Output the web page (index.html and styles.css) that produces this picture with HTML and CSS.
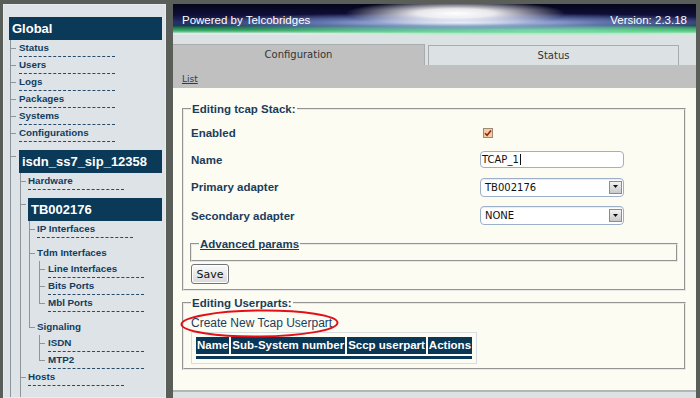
FILE: index.html
```html
<!DOCTYPE html>
<html lang="en">
<head>
  <meta charset="UTF-8">
  <meta name="viewport" content="width=device-width, initial-scale=1.0">
  <title>Toolpack - Editing tcap Stack</title>
  <link rel="stylesheet" href="styles.css">
</head>
<body>
  <div class="sidebar">
    <div class="nav-head">Global</div>
    <ul class="tree open lvl1">
      <li><a href="#">Status</a></li>
      <li><a href="#">Users</a></li>
      <li><a href="#">Logs</a></li>
      <li><a href="#">Packages</a></li>
      <li><a href="#">Systems</a></li>
      <li><a href="#">Configurations</a></li>
      <li class="group">
        <div class="nav-head">isdn_ss7_sip_12358</div>
        <ul class="tree open lvl2">
          <li><a href="#">Hardware</a></li>
          <li class="group">
            <div class="nav-head">TB002176</div>
            <ul class="tree lvl3">
              <li><a href="#">IP Interfaces</a></li>
              <li class="cat">
                <span>Tdm Interfaces</span>
                <ul class="tree lvl4">
                  <li><a href="#">Line Interfaces</a></li>
                  <li><a href="#">Bits Ports</a></li>
                  <li><a href="#">Mbl Ports</a></li>
                </ul>
              </li>
              <li class="cat">
                <span>Signaling</span>
                <ul class="tree lvl4">
                  <li><a href="#">ISDN</a></li>
                  <li><a href="#">MTP2</a></li>
                </ul>
              </li>
            </ul>
          </li>
          <li><a href="#">Hosts</a></li>
        </ul>
      </li>
    </ul>
  </div>

  <div class="main">
    <div class="banner">
      <span>Powered by Telcobridges</span>
      <span>Version: 2.3.18</span>
    </div>
    <div class="tabs">
      <div class="tab active">Configuration</div>
      <div class="tab">Status</div>
    </div>
    <div class="subbar"><a href="#">List</a></div>

    <div class="content">
      <fieldset class="box">
        <legend>Editing tcap Stack:</legend>
        <div class="form">
          <label>Enabled</label>
          <span class="check">
            <svg width="8" height="8" viewBox="0 0 8 8"><path d="M1 4.2 L3.1 6.3 L7 1.4" fill="none" stroke="#8a2c0c" stroke-width="1.6"/></svg>
          </span>
          <label>Name</label>
          <div class="text"><span>TCAP_1</span><span class="caret"></span></div>
          <label>Primary adapter</label>
          <div class="select">
            <span class="select-value">TB002176</span>
            <span class="select-btn"><svg width="5" height="4" viewBox="0 0 5 4"><path d="M0 0 H5 L2.5 3 Z" fill="#111"/></svg></span>
          </div>
          <label>Secondary adapter</label>
          <div class="select">
            <span class="select-value">NONE</span>
            <span class="select-btn"><svg width="5" height="4" viewBox="0 0 5 4"><path d="M0 0 H5 L2.5 3 Z" fill="#111"/></svg></span>
          </div>
        </div>
        <fieldset class="box advanced">
          <legend><a href="#">Advanced params</a></legend>
        </fieldset>
        <button class="btn" type="button">Save</button>
      </fieldset>

      <fieldset class="box parts-box">
        <legend>Editing Userparts:</legend>
        <div class="create">
          <a href="#">Create New Tcap Userpart</a>
          <svg class="circle" width="160" height="30" viewBox="0 0 160 30">
            <ellipse cx="79.5" cy="14.5" rx="78" ry="13" fill="none" stroke="#e3101a" stroke-width="2" transform="rotate(-0.6 80 15)"/>
          </svg>
        </div>
        <table class="parts">
          <tr>
            <th>Name</th>
            <th>Sub-System number</th>
            <th>Sccp userpart</th>
            <th>Actions</th>
          </tr>
          <tr class="bar"><td colspan="4"></td></tr>
        </table>
      </fieldset>
    </div>
    <div class="footer"></div>
  </div>
</body>
</html>
```

FILE: styles.css
```css
body {
  margin: 0;
  height: 100vh;
  box-sizing: border-box;
  padding: 4px 4px 0 3px;
  display: flex;
  gap: 7px;
  overflow: hidden;
  background: #5a5e58;
  font-family: "Liberation Sans", Arial, sans-serif;
}

/* left navigation */
.sidebar {
  flex: 0 0 163px;
  box-sizing: border-box;
  background: #dde3e6;
  border: 1px solid #e8ecee;
  padding: 12px 3px 0 5px;
  overflow: hidden;
}
.nav-head {
  position: relative;
  background: #0b3958;
  color: #fff;
  font-weight: bold;
  font-size: 13px;
  line-height: 23px;
  padding-left: 3px;
  white-space: nowrap;
}
.tree {
  list-style: none;
  margin: 0;
  padding: 0;
  --b: 0px;
}
.tree.open {
  border-left: 1px solid #8d969b;
  --b: 1px;
  padding-bottom: 40px;
}
.lvl1 { margin-left: 1px; --pad: 8px; }
.lvl2 { margin-left: 1px; --pad: 7px; padding-bottom: 0; }
.lvl3 { margin-left: 1px; --pad: 8px; }
.lvl4 { margin-left: 2px; --pad: 9px; }

.tree > li {
  position: relative;
  display: flow-root;
  padding-left: var(--pad);
}
.tree > li:first-child { padding-top: 2px; }
.tree > li.group { padding-top: 6px; }
.tree > li.cat { padding-top: 7px; }

/* vertical connector for closed lists */
.tree:not(.open) > li::after {
  content: "";
  position: absolute;
  left: 0;
  top: 0;
  bottom: 0;
  width: 1px;
  background: #8d969b;
}
.tree:not(.open) > li:last-child::after { bottom: auto; height: 7px; }
.tree:not(.open) > li.cat:last-child::after { height: 14px; }

/* horizontal ticks */
.tree > li > a::before,
.tree > li > span::before,
.tree > li > .nav-head::before {
  content: "";
  position: absolute;
  top: 6px;
  left: calc(0px - var(--pad) - var(--b));
  width: 6px;
  height: 1px;
  background: #8d969b;
}
.tree a,
.tree .cat > span {
  position: relative;
  display: block;
  color: #113d60;
  font-weight: bold;
  font-size: 9.8px;
  line-height: 12px;
  text-decoration: none;
  white-space: nowrap;
}
.tree a {
  width: 96px;
  padding-bottom: 2px;
  margin-bottom: 2px;
  border-bottom: 1px dashed #27496a;
}
.tree .cat > span { padding-bottom: 2px; }

/* main column */
.main {
  flex: 0 0 523px;
  display: flex;
  flex-direction: column;
}
.banner {
  height: 31px;
  flex: none;
  display: flex;
  justify-content: space-between;
  align-items: center;
  padding: 0 9px;
  color: #fff;
  font-size: 11.5px;
  background:
    radial-gradient(ellipse 110px 13px at 54% 30%, #ffffff 0%, rgba(255,255,255,0.9) 35%, rgba(255,255,255,0) 100%),
    radial-gradient(ellipse 280px 10px at 55% 60%, rgba(225,235,255,0.95) 0%, rgba(150,175,235,0.55) 50%, rgba(80,100,180,0) 100%),
    radial-gradient(ellipse 300px 6px at 70% 86%, rgba(120,230,160,0.9) 0%, rgba(120,230,160,0) 100%),
    linear-gradient(to bottom, rgba(0,0,0,0) 0%, rgba(0,0,0,0) 70%, #1f8050 77%, #38a866 85%, #6cc690 90%, #dfe9e6 95%, #e3e9ea 100%),
    linear-gradient(to bottom, #05051a 0%, #0f0f38 35%, #26306a 60%, #1c3a52 72%);
}
.tabs {
  flex: none;
  display: flex;
  gap: 3px;
  padding-top: 9px;
  background: #dce2e4;
}
.tab {
  width: 251px;
  height: 20px;
  box-sizing: border-box;
  margin-top: 1px;
  border: 1px solid #a7acae;
  border-bottom: none;
  text-align: center;
  font-family: "DejaVu Sans", Verdana, sans-serif;
  font-size: 10px;
  line-height: 19px;
  color: #333;
}
.tab.active {
  width: 252px;
  height: 21px;
  margin-top: 0;
  border-left: none;
  background: #c0c0c0;
  line-height: 20px;
}
.subbar {
  flex: none;
  height: 23px;
  background: #c0c0c0;
  padding-left: 9px;
  line-height: 23px;
}
.subbar a {
  font-family: "DejaVu Sans", Verdana, sans-serif;
  font-size: 9px;
  color: #1c3f63;
}

.content {
  flex: none;
  background: #fdfcf3;
  padding: 14px 10px 20px 9px;
}
.footer {
  flex: 1;
  border-top: 2px solid #b3b6b6;
  background: #dce2e4;
}

.box {
  margin: 0;
  padding: 4px 7px 5px;
  border: 2px groove #e8e8e8;
  min-width: 0;
}
.box legend {
  padding: 0 1px;
  font-weight: bold;
  font-size: 11.5px;
  line-height: 14px;
  color: #1b3c5c;
}
.form {
  display: grid;
  grid-template-columns: 289px 1fr;
  grid-template-rows: 26px 27px 28px 29px;
  align-items: center;
}
.form label {
  font-weight: bold;
  font-size: 11.5px;
  color: #1b3c5c;
}
.check {
  margin-left: 3px;
  width: 10px;
  height: 10px;
  box-sizing: border-box;
  border: 1px solid #a08878;
  background: #f6cba6;
  display: flex;
  align-items: center;
  justify-content: center;
}
.text,
.select {
  width: 144px;
  box-sizing: border-box;
  border: 1px solid #9db0c9;
  border-radius: 4px;
  background: #fff;
  font-family: "DejaVu Sans", Verdana, sans-serif;
  font-size: 10px;
  color: #111;
}
.text {
  height: 17px;
  display: flex;
  align-items: center;
  padding: 0 1px;
}
.caret {
  width: 1px;
  height: 11px;
  margin-left: 1px;
  background: #111;
}
.select {
  height: 19px;
  display: flex;
  align-items: center;
  padding: 0 1px 0 4px;
  box-shadow: inset 0 1px 1px rgba(0,0,0,0.08);
}
.select-value { flex: 1; }
.select-btn {
  width: 13px;
  height: 13px;
  box-sizing: border-box;
  border: 1px solid #8c8c8c;
  background: linear-gradient(#f2f2f2, #c9c9c9);
  display: flex;
  align-items: center;
  justify-content: center;
}
.advanced {
  margin: 7px -1px 0;
  padding: 0 7px 9px;
}
.advanced legend a {
  color: #1b3c5c;
}
.btn {
  display: block;
  margin-top: 2px;
  width: 38px;
  height: 20px;
  padding: 0;
  font-family: "DejaVu Sans", Verdana, sans-serif;
  font-size: 11px;
  color: #111;
  border: 1px solid #6f7478;
  border-radius: 3px;
  background: linear-gradient(#fafafa, #d9d9d9);
  box-shadow: inset 0 0 0 1px #fff;
}

.parts-box {
  margin-top: 5px;
  padding: 6px 7px 4px;
}
.create {
  position: relative;
  line-height: 14px;
  font-size: 12px;
}
.create a {
  color: #1a3d5e;
  text-decoration: none;
}
.circle {
  position: absolute;
  left: -11px;
  top: -7px;
}
.parts {
  margin-top: 2px;
  border: 1px solid #d5dde2;
  padding: 2px;
  border-spacing: 2px;
}
.parts th {
  background: #0b3756;
  color: #fff;
  font-size: 11.5px;
  line-height: 17px;
  padding: 0 1px;
  text-align: left;
  white-space: nowrap;
}
.parts .bar td {
  height: 3px;
  padding: 0;
  font-size: 0;
  line-height: 0;
  background: #0b3756;
}
```
